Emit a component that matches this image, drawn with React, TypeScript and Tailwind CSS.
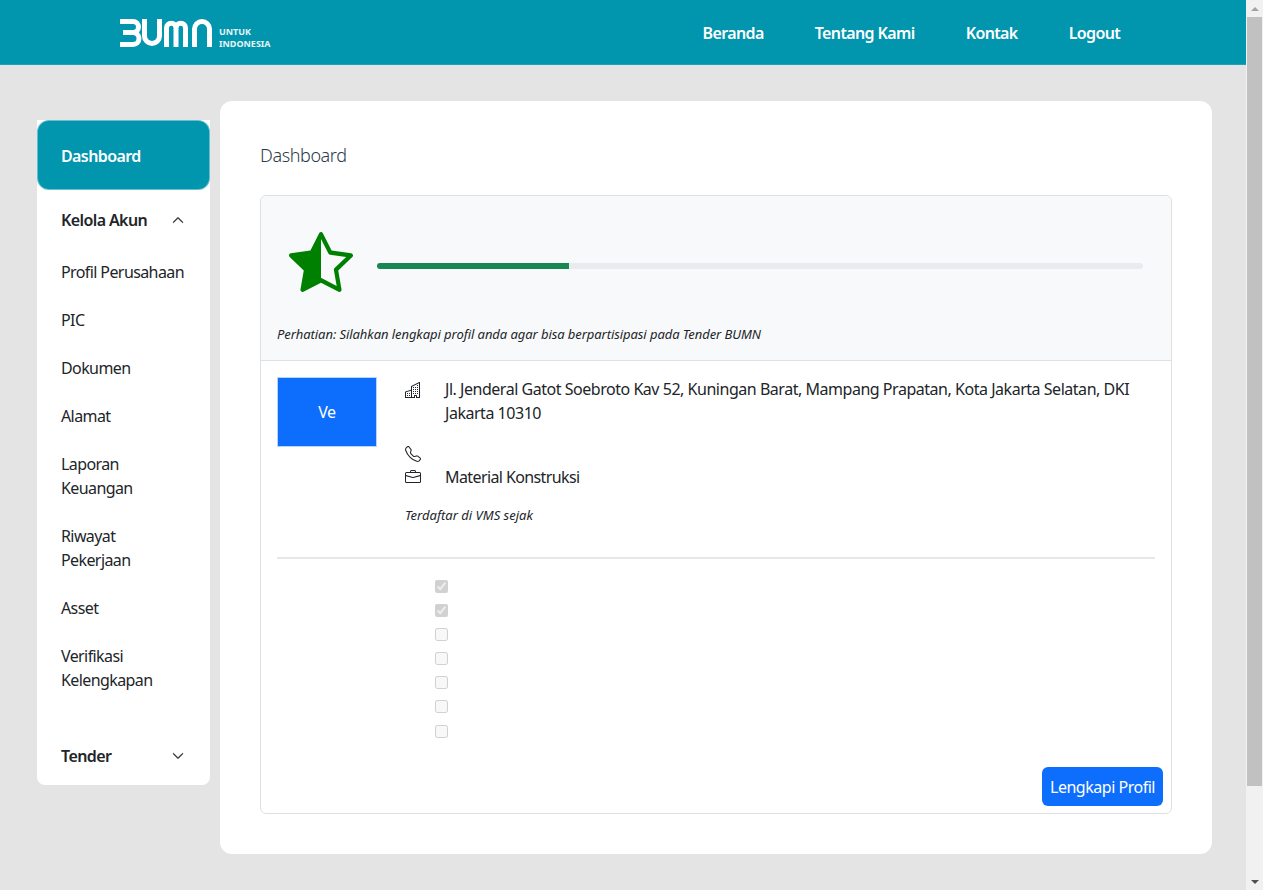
import { BsBriefcase, BsBuildings, BsChevronDown, BsChevronUp, BsStarHalf, BsTelephone } from 'react-icons/bs'

const akunMenu = [
  ['Profil Perusahaan'],
  ['PIC'],
  ['Dokumen'],
  ['Alamat'],
  ['Laporan', 'Keuangan'],
  ['Riwayat', 'Pekerjaan'],
  ['Asset'],
  ['Verifikasi', 'Kelengkapan'],
]

const navLinks = ['Beranda', 'Tentang Kami', 'Kontak', 'Logout']
const checks = [true, true, false, false, false, false, false]

function Logo() {
  return (
    <div className="flex items-start h-[28px] mt-[1px]">
      <svg width="94" height="28" viewBox="0 0 94 28" fill="none" stroke="white" strokeWidth="5">
        <path d="M0 2.500H13a5.500 5.500 0 0 1 0 11H3M13 13.500a6 6 0 0 1 0 12H0" />
        <path d="M24.500 0V17a7.500 7.500 0 0 0 15 0V0" />
        <path d="M46.500 28V9a4.750 4.750 0 0 1 9.500 0V28M56 9a4.750 4.750 0 0 1 9.500 0V28" />
        <path d="M74.500 28V10a7.500 7.500 0 0 1 15 0V28" />
      </svg>
      <div className="ml-[5px] mt-[7px] text-[9px] leading-[12.5px] font-bold text-white tracking-normal opacity-90">
        <div>UNTUK</div>
        <div>INDONESIA</div>
      </div>
    </div>
  )
}

function Scrollbar() {
  return (
    <div className="w-[17px] h-full bg-[#f1f1f1] flex flex-col items-center shrink-0">
      <div className="h-[17px] flex items-center justify-center">
        <div className="w-0 h-0 border-x-[4px] border-x-transparent border-b-[4px] border-b-[#a3a3a3]" />
      </div>
      <div className="w-[15px] h-[769px] bg-[#c1c1c1]" />
      <div className="flex-1" />
      <div className="h-[17px] flex items-center justify-center">
        <div className="w-0 h-0 border-x-[4px] border-x-transparent border-t-[4px] border-t-[#505050]" />
      </div>
    </div>
  )
}

export default function App() {
  return (
    <div className="h-[890px] overflow-hidden flex text-[#212529] text-base font-['Noto_Sans',sans-serif] tracking-[-0.47px]">
      <div className="flex-1 bg-[#e4e4e4]">
        <header className="h-[65px] bg-[#0195ae] border-b border-[#1aa3ba] pl-[120px] flex items-center">
          <Logo />
          <nav className="ml-[432px] mt-[1px] flex gap-[51px] text-white font-semibold tracking-[-0.62px]">
            {navLinks.map((link) => (
              <a key={link}>{link}</a>
            ))}
          </nav>
        </header>

        <div className="flex items-start pl-[37px]">
          <aside className="w-[173px] h-[665px] mt-[55px] bg-white rounded-b-lg tracking-[-0.6px]">
            <div className="h-[70px] bg-[#0195ae] rounded-xl border border-white/40 pl-[23px] pt-[1px] flex items-center text-white font-semibold">
              Dashboard
            </div>
            <div className="h-[58px] pl-6 pr-[26px] pt-[2px] flex items-center justify-between font-semibold">
              <span>Kelola Akun</span>
              <BsChevronUp className="w-3 h-3 stroke-[0.8]" />
            </div>
            <ul>
              {akunMenu.map((lines) => (
                <li key={lines[0]} className="pl-6 py-3 leading-6">
                  {lines.map((line) => (
                    <div key={line}>{line}</div>
                  ))}
                </li>
              ))}
            </ul>
            <div className="h-[60px] mt-[22px] pl-6 pr-[26px] flex items-center justify-between font-semibold">
              <span>Tender</span>
              <BsChevronDown className="w-3 h-3 stroke-[0.8]" />
            </div>
          </aside>

          <main className="w-[992px] h-[753px] mt-9 ml-[10px] bg-white rounded-xl px-10 pt-[42px]">
            <h1 className="text-lg leading-6 mb-[28px] font-light text-[#2b3a4a] tracking-[-0.4px]">Dashboard</h1>

            <div className="h-[619px] border border-[#dfe0e1] rounded-md flex flex-col">
              <div className="h-[165px] bg-[#f8f9fa] border-b border-[#dfe0e1] rounded-t-md px-4 pt-[34px]">
                <div className="h-[64px] flex items-center">
                  <BsStarHalf className="w-16 h-16 ml-[12px] text-[#008000]" />
                  <div className="ml-6 mr-3 flex-1 h-[6px] mt-[8px] bg-[#e9ecef] rounded-full overflow-hidden">
                    <div className="w-1/4 h-full bg-[#198754]" />
                  </div>
                </div>
                <p className="mt-[30px] text-[13px] leading-5 italic tracking-[-0.07px]">
                  Perhatian: Silahkan lengkapi profil anda agar bisa berpartisipasi pada Tender BUMN
                </p>
              </div>

              <div className="flex-1 flex flex-col px-4 pt-4">
                <div className="flex h-[180px]">
                  <div className="w-[100px] h-[70px] bg-[#0d6efd] border border-[#b6d4fe] text-white flex items-center justify-center">
                    Ve
                  </div>
                  <div className="ml-7 flex-1">
                    <div className="flex">
                      <BsBuildings className="w-4 h-4 mt-[5px] shrink-0" />
                      <p className="ml-6 leading-6">
                        Jl. Jenderal Gatot Soebroto Kav 52, Kuningan Barat, Mampang Prapatan, Kota Jakarta Selatan, DKI Jakarta 10310
                      </p>
                    </div>
                    <BsTelephone className="w-4 h-4 mt-[21px]" />
                    <div className="flex items-center mt-[3px] h-6">
                      <BsBriefcase className="w-4 h-4 shrink-0" />
                      <span className="ml-6 tracking-[-0.6px]">Material Konstruksi</span>
                    </div>
                    <p className="mt-[16px] text-[13px] leading-5 italic tracking-normal">Terdaftar di VMS sejak</p>
                  </div>
                </div>

                <hr className="border-t-2 border-[#e6e7e8]" />

                <div className="mt-[15px] ml-[158px] flex flex-col">
                  {checks.map((on, i) => (
                    <div key={i} className="h-[24.17px] flex items-center">
                      <input type="checkbox" disabled checked={on} readOnly className="w-[13px] h-[13px]" />
                    </div>
                  ))}
                </div>

                <div className="flex justify-end mt-[24px] mr-[-8px]">
                  <button className="h-[39px] px-2 bg-[#0d6efd] text-white rounded-md tracking-[-0.48px]">Lengkapi Profil</button>
                </div>
              </div>
            </div>
          </main>
        </div>
      </div>
      <Scrollbar />
    </div>
  )
}
